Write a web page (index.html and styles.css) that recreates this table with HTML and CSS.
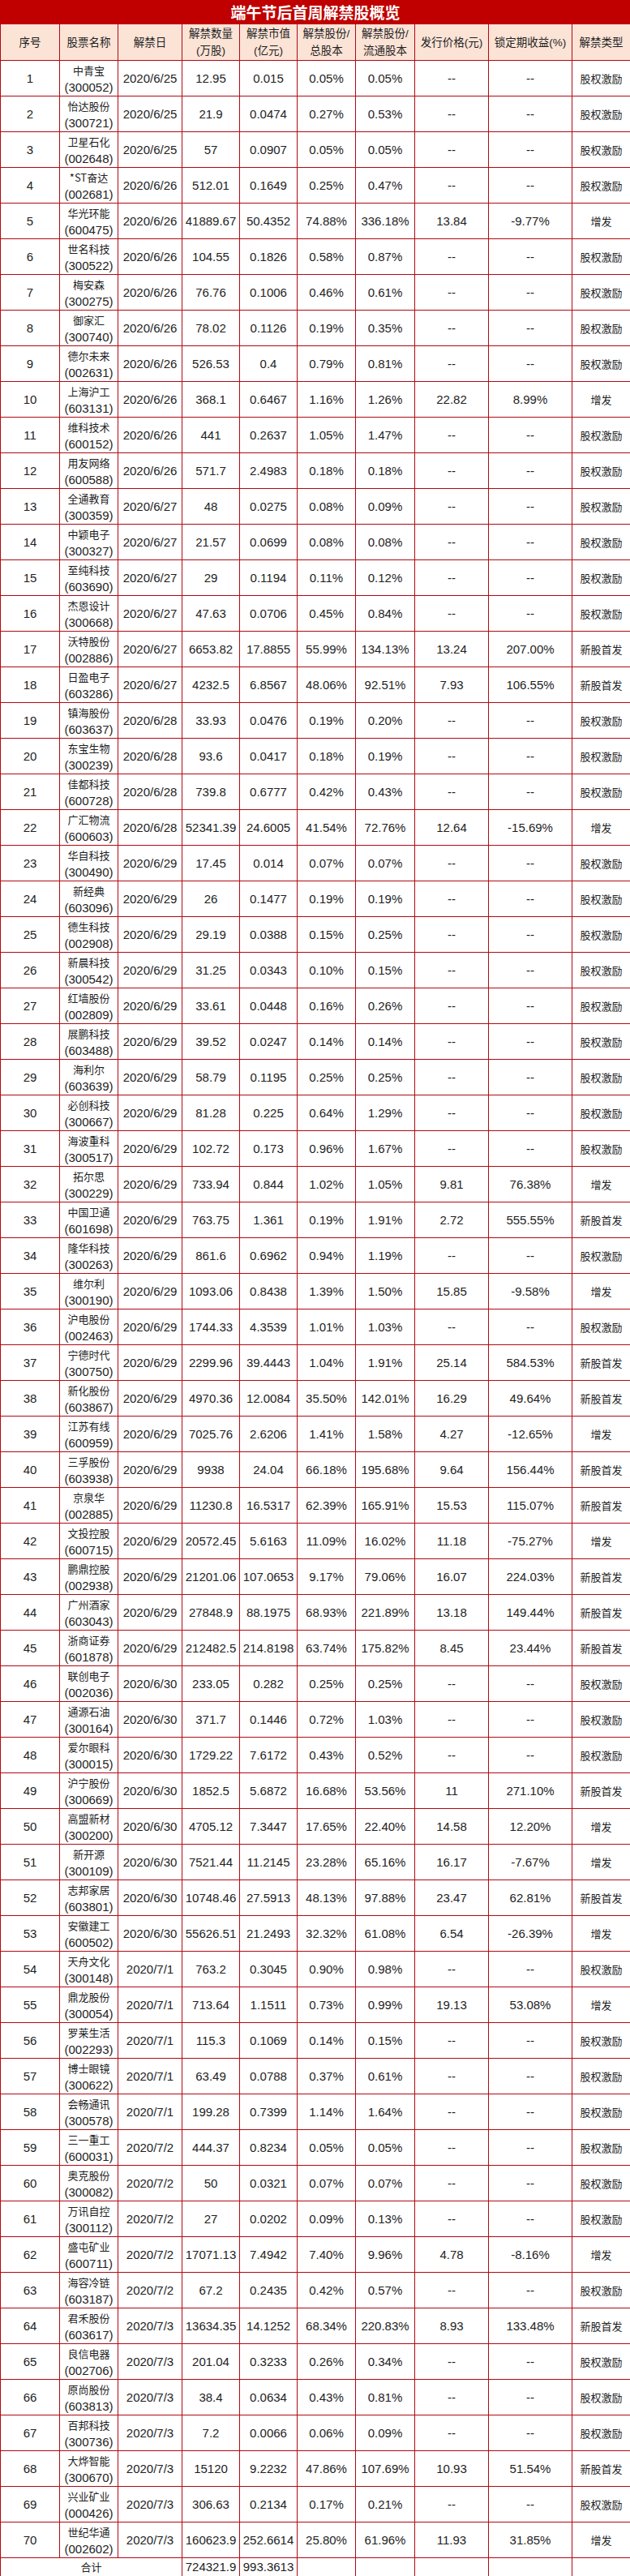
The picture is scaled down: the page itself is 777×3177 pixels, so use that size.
FILE: index.html
```html
<!DOCTYPE html>
<html lang="zh-CN">
<head>
<meta charset="utf-8">
<title>端午节后首周解禁股概览</title>
<link rel="stylesheet" href="styles.css">
</head>
<body>
<table class="tbl">
<colgroup>
<col class="w1"><col class="w2"><col class="w3"><col class="w4"><col class="w5"><col class="w6"><col class="w7"><col class="w8"><col class="w9"><col class="w10">
</colgroup>
<thead>
<tr class="title"><th colspan="10">端午节后首周解禁股概览</th></tr>
<tr class="head"><th>序号</th><th>股票名称</th><th>解禁日</th><th>解禁数量<br>(万股)</th><th>解禁市值<br>(亿元)</th><th>解禁股份/<br>总股本</th><th>解禁股份/<br>流通股本</th><th>发行价格(元)</th><th>锁定期收益(%)</th><th>解禁类型</th></tr>
</thead>
<tbody>
<tr><td>1</td><td><span class="nm">中青宝</span><span class="cd">(300052)</span></td><td>2020/6/25</td><td>12.95</td><td>0.015</td><td>0.05%</td><td>0.05%</td><td>--</td><td>--</td><td class="cn">股权激励</td></tr>
<tr><td>2</td><td><span class="nm">怡达股份</span><span class="cd">(300721)</span></td><td>2020/6/25</td><td>21.9</td><td>0.0474</td><td>0.27%</td><td>0.53%</td><td>--</td><td>--</td><td class="cn">股权激励</td></tr>
<tr><td>3</td><td><span class="nm">卫星石化</span><span class="cd">(002648)</span></td><td>2020/6/25</td><td>57</td><td>0.0907</td><td>0.05%</td><td>0.05%</td><td>--</td><td>--</td><td class="cn">股权激励</td></tr>
<tr><td>4</td><td><span class="nm">*ST奋达</span><span class="cd">(002681)</span></td><td>2020/6/26</td><td>512.01</td><td>0.1649</td><td>0.25%</td><td>0.47%</td><td>--</td><td>--</td><td class="cn">股权激励</td></tr>
<tr><td>5</td><td><span class="nm">华光环能</span><span class="cd">(600475)</span></td><td>2020/6/26</td><td>41889.67</td><td>50.4352</td><td>74.88%</td><td>336.18%</td><td>13.84</td><td>-9.77%</td><td class="cn">增发</td></tr>
<tr><td>6</td><td><span class="nm">世名科技</span><span class="cd">(300522)</span></td><td>2020/6/26</td><td>104.55</td><td>0.1826</td><td>0.58%</td><td>0.87%</td><td>--</td><td>--</td><td class="cn">股权激励</td></tr>
<tr><td>7</td><td><span class="nm">梅安森</span><span class="cd">(300275)</span></td><td>2020/6/26</td><td>76.76</td><td>0.1006</td><td>0.46%</td><td>0.61%</td><td>--</td><td>--</td><td class="cn">股权激励</td></tr>
<tr><td>8</td><td><span class="nm">御家汇</span><span class="cd">(300740)</span></td><td>2020/6/26</td><td>78.02</td><td>0.1126</td><td>0.19%</td><td>0.35%</td><td>--</td><td>--</td><td class="cn">股权激励</td></tr>
<tr><td>9</td><td><span class="nm">德尔未来</span><span class="cd">(002631)</span></td><td>2020/6/26</td><td>526.53</td><td>0.4</td><td>0.79%</td><td>0.81%</td><td>--</td><td>--</td><td class="cn">股权激励</td></tr>
<tr><td>10</td><td><span class="nm">上海沪工</span><span class="cd">(603131)</span></td><td>2020/6/26</td><td>368.1</td><td>0.6467</td><td>1.16%</td><td>1.26%</td><td>22.82</td><td>8.99%</td><td class="cn">增发</td></tr>
<tr><td>11</td><td><span class="nm">维科技术</span><span class="cd">(600152)</span></td><td>2020/6/26</td><td>441</td><td>0.2637</td><td>1.05%</td><td>1.47%</td><td>--</td><td>--</td><td class="cn">股权激励</td></tr>
<tr><td>12</td><td><span class="nm">用友网络</span><span class="cd">(600588)</span></td><td>2020/6/26</td><td>571.7</td><td>2.4983</td><td>0.18%</td><td>0.18%</td><td>--</td><td>--</td><td class="cn">股权激励</td></tr>
<tr><td>13</td><td><span class="nm">全通教育</span><span class="cd">(300359)</span></td><td>2020/6/27</td><td>48</td><td>0.0275</td><td>0.08%</td><td>0.09%</td><td>--</td><td>--</td><td class="cn">股权激励</td></tr>
<tr><td>14</td><td><span class="nm">中颖电子</span><span class="cd">(300327)</span></td><td>2020/6/27</td><td>21.57</td><td>0.0699</td><td>0.08%</td><td>0.08%</td><td>--</td><td>--</td><td class="cn">股权激励</td></tr>
<tr><td>15</td><td><span class="nm">至纯科技</span><span class="cd">(603690)</span></td><td>2020/6/27</td><td>29</td><td>0.1194</td><td>0.11%</td><td>0.12%</td><td>--</td><td>--</td><td class="cn">股权激励</td></tr>
<tr><td>16</td><td><span class="nm">杰恩设计</span><span class="cd">(300668)</span></td><td>2020/6/27</td><td>47.63</td><td>0.0706</td><td>0.45%</td><td>0.84%</td><td>--</td><td>--</td><td class="cn">股权激励</td></tr>
<tr><td>17</td><td><span class="nm">沃特股份</span><span class="cd">(002886)</span></td><td>2020/6/27</td><td>6653.82</td><td>17.8855</td><td>55.99%</td><td>134.13%</td><td>13.24</td><td>207.00%</td><td class="cn">新股首发</td></tr>
<tr><td>18</td><td><span class="nm">日盈电子</span><span class="cd">(603286)</span></td><td>2020/6/27</td><td>4232.5</td><td>6.8567</td><td>48.06%</td><td>92.51%</td><td>7.93</td><td>106.55%</td><td class="cn">新股首发</td></tr>
<tr><td>19</td><td><span class="nm">镇海股份</span><span class="cd">(603637)</span></td><td>2020/6/28</td><td>33.93</td><td>0.0476</td><td>0.19%</td><td>0.20%</td><td>--</td><td>--</td><td class="cn">股权激励</td></tr>
<tr><td>20</td><td><span class="nm">东宝生物</span><span class="cd">(300239)</span></td><td>2020/6/28</td><td>93.6</td><td>0.0417</td><td>0.18%</td><td>0.19%</td><td>--</td><td>--</td><td class="cn">股权激励</td></tr>
<tr><td>21</td><td><span class="nm">佳都科技</span><span class="cd">(600728)</span></td><td>2020/6/28</td><td>739.8</td><td>0.6777</td><td>0.42%</td><td>0.43%</td><td>--</td><td>--</td><td class="cn">股权激励</td></tr>
<tr><td>22</td><td><span class="nm">广汇物流</span><span class="cd">(600603)</span></td><td>2020/6/28</td><td>52341.39</td><td>24.6005</td><td>41.54%</td><td>72.76%</td><td>12.64</td><td>-15.69%</td><td class="cn">增发</td></tr>
<tr><td>23</td><td><span class="nm">华自科技</span><span class="cd">(300490)</span></td><td>2020/6/29</td><td>17.45</td><td>0.014</td><td>0.07%</td><td>0.07%</td><td>--</td><td>--</td><td class="cn">股权激励</td></tr>
<tr><td>24</td><td><span class="nm">新经典</span><span class="cd">(603096)</span></td><td>2020/6/29</td><td>26</td><td>0.1477</td><td>0.19%</td><td>0.19%</td><td>--</td><td>--</td><td class="cn">股权激励</td></tr>
<tr><td>25</td><td><span class="nm">德生科技</span><span class="cd">(002908)</span></td><td>2020/6/29</td><td>29.19</td><td>0.0388</td><td>0.15%</td><td>0.25%</td><td>--</td><td>--</td><td class="cn">股权激励</td></tr>
<tr><td>26</td><td><span class="nm">新晨科技</span><span class="cd">(300542)</span></td><td>2020/6/29</td><td>31.25</td><td>0.0343</td><td>0.10%</td><td>0.15%</td><td>--</td><td>--</td><td class="cn">股权激励</td></tr>
<tr><td>27</td><td><span class="nm">红墙股份</span><span class="cd">(002809)</span></td><td>2020/6/29</td><td>33.61</td><td>0.0448</td><td>0.16%</td><td>0.26%</td><td>--</td><td>--</td><td class="cn">股权激励</td></tr>
<tr><td>28</td><td><span class="nm">展鹏科技</span><span class="cd">(603488)</span></td><td>2020/6/29</td><td>39.52</td><td>0.0247</td><td>0.14%</td><td>0.14%</td><td>--</td><td>--</td><td class="cn">股权激励</td></tr>
<tr><td>29</td><td><span class="nm">海利尔</span><span class="cd">(603639)</span></td><td>2020/6/29</td><td>58.79</td><td>0.1195</td><td>0.25%</td><td>0.25%</td><td>--</td><td>--</td><td class="cn">股权激励</td></tr>
<tr><td>30</td><td><span class="nm">必创科技</span><span class="cd">(300667)</span></td><td>2020/6/29</td><td>81.28</td><td>0.225</td><td>0.64%</td><td>1.29%</td><td>--</td><td>--</td><td class="cn">股权激励</td></tr>
<tr><td>31</td><td><span class="nm">海波重科</span><span class="cd">(300517)</span></td><td>2020/6/29</td><td>102.72</td><td>0.173</td><td>0.96%</td><td>1.67%</td><td>--</td><td>--</td><td class="cn">股权激励</td></tr>
<tr><td>32</td><td><span class="nm">拓尔思</span><span class="cd">(300229)</span></td><td>2020/6/29</td><td>733.94</td><td>0.844</td><td>1.02%</td><td>1.05%</td><td>9.81</td><td>76.38%</td><td class="cn">增发</td></tr>
<tr><td>33</td><td><span class="nm">中国卫通</span><span class="cd">(601698)</span></td><td>2020/6/29</td><td>763.75</td><td>1.361</td><td>0.19%</td><td>1.91%</td><td>2.72</td><td>555.55%</td><td class="cn">新股首发</td></tr>
<tr><td>34</td><td><span class="nm">隆华科技</span><span class="cd">(300263)</span></td><td>2020/6/29</td><td>861.6</td><td>0.6962</td><td>0.94%</td><td>1.19%</td><td>--</td><td>--</td><td class="cn">股权激励</td></tr>
<tr><td>35</td><td><span class="nm">维尔利</span><span class="cd">(300190)</span></td><td>2020/6/29</td><td>1093.06</td><td>0.8438</td><td>1.39%</td><td>1.50%</td><td>15.85</td><td>-9.58%</td><td class="cn">增发</td></tr>
<tr><td>36</td><td><span class="nm">沪电股份</span><span class="cd">(002463)</span></td><td>2020/6/29</td><td>1744.33</td><td>4.3539</td><td>1.01%</td><td>1.03%</td><td>--</td><td>--</td><td class="cn">股权激励</td></tr>
<tr><td>37</td><td><span class="nm">宁德时代</span><span class="cd">(300750)</span></td><td>2020/6/29</td><td>2299.96</td><td>39.4443</td><td>1.04%</td><td>1.91%</td><td>25.14</td><td>584.53%</td><td class="cn">新股首发</td></tr>
<tr><td>38</td><td><span class="nm">新化股份</span><span class="cd">(603867)</span></td><td>2020/6/29</td><td>4970.36</td><td>12.0084</td><td>35.50%</td><td>142.01%</td><td>16.29</td><td>49.64%</td><td class="cn">新股首发</td></tr>
<tr><td>39</td><td><span class="nm">江苏有线</span><span class="cd">(600959)</span></td><td>2020/6/29</td><td>7025.76</td><td>2.6206</td><td>1.41%</td><td>1.58%</td><td>4.27</td><td>-12.65%</td><td class="cn">增发</td></tr>
<tr><td>40</td><td><span class="nm">三孚股份</span><span class="cd">(603938)</span></td><td>2020/6/29</td><td>9938</td><td>24.04</td><td>66.18%</td><td>195.68%</td><td>9.64</td><td>156.44%</td><td class="cn">新股首发</td></tr>
<tr><td>41</td><td><span class="nm">京泉华</span><span class="cd">(002885)</span></td><td>2020/6/29</td><td>11230.8</td><td>16.5317</td><td>62.39%</td><td>165.91%</td><td>15.53</td><td>115.07%</td><td class="cn">新股首发</td></tr>
<tr><td>42</td><td><span class="nm">文投控股</span><span class="cd">(600715)</span></td><td>2020/6/29</td><td>20572.45</td><td>5.6163</td><td>11.09%</td><td>16.02%</td><td>11.18</td><td>-75.27%</td><td class="cn">增发</td></tr>
<tr><td>43</td><td><span class="nm">鹏鼎控股</span><span class="cd">(002938)</span></td><td>2020/6/29</td><td>21201.06</td><td>107.0653</td><td>9.17%</td><td>79.06%</td><td>16.07</td><td>224.03%</td><td class="cn">新股首发</td></tr>
<tr><td>44</td><td><span class="nm">广州酒家</span><span class="cd">(603043)</span></td><td>2020/6/29</td><td>27848.9</td><td>88.1975</td><td>68.93%</td><td>221.89%</td><td>13.18</td><td>149.44%</td><td class="cn">新股首发</td></tr>
<tr><td>45</td><td><span class="nm">浙商证券</span><span class="cd">(601878)</span></td><td>2020/6/29</td><td>212482.5</td><td>214.8198</td><td>63.74%</td><td>175.82%</td><td>8.45</td><td>23.44%</td><td class="cn">新股首发</td></tr>
<tr><td>46</td><td><span class="nm">联创电子</span><span class="cd">(002036)</span></td><td>2020/6/30</td><td>233.05</td><td>0.282</td><td>0.25%</td><td>0.25%</td><td>--</td><td>--</td><td class="cn">股权激励</td></tr>
<tr><td>47</td><td><span class="nm">通源石油</span><span class="cd">(300164)</span></td><td>2020/6/30</td><td>371.7</td><td>0.1446</td><td>0.72%</td><td>1.03%</td><td>--</td><td>--</td><td class="cn">股权激励</td></tr>
<tr><td>48</td><td><span class="nm">爱尔眼科</span><span class="cd">(300015)</span></td><td>2020/6/30</td><td>1729.22</td><td>7.6172</td><td>0.43%</td><td>0.52%</td><td>--</td><td>--</td><td class="cn">股权激励</td></tr>
<tr><td>49</td><td><span class="nm">沪宁股份</span><span class="cd">(300669)</span></td><td>2020/6/30</td><td>1852.5</td><td>5.6872</td><td>16.68%</td><td>53.56%</td><td>11</td><td>271.10%</td><td class="cn">新股首发</td></tr>
<tr><td>50</td><td><span class="nm">高盟新材</span><span class="cd">(300200)</span></td><td>2020/6/30</td><td>4705.12</td><td>7.3447</td><td>17.65%</td><td>22.40%</td><td>14.58</td><td>12.20%</td><td class="cn">增发</td></tr>
<tr><td>51</td><td><span class="nm">新开源</span><span class="cd">(300109)</span></td><td>2020/6/30</td><td>7521.44</td><td>11.2145</td><td>23.28%</td><td>65.16%</td><td>16.17</td><td>-7.67%</td><td class="cn">增发</td></tr>
<tr><td>52</td><td><span class="nm">志邦家居</span><span class="cd">(603801)</span></td><td>2020/6/30</td><td>10748.46</td><td>27.5913</td><td>48.13%</td><td>97.88%</td><td>23.47</td><td>62.81%</td><td class="cn">新股首发</td></tr>
<tr><td>53</td><td><span class="nm">安徽建工</span><span class="cd">(600502)</span></td><td>2020/6/30</td><td>55626.51</td><td>21.2493</td><td>32.32%</td><td>61.08%</td><td>6.54</td><td>-26.39%</td><td class="cn">增发</td></tr>
<tr><td>54</td><td><span class="nm">天舟文化</span><span class="cd">(300148)</span></td><td>2020/7/1</td><td>763.2</td><td>0.3045</td><td>0.90%</td><td>0.98%</td><td>--</td><td>--</td><td class="cn">股权激励</td></tr>
<tr><td>55</td><td><span class="nm">鼎龙股份</span><span class="cd">(300054)</span></td><td>2020/7/1</td><td>713.64</td><td>1.1511</td><td>0.73%</td><td>0.99%</td><td>19.13</td><td>53.08%</td><td class="cn">增发</td></tr>
<tr><td>56</td><td><span class="nm">罗莱生活</span><span class="cd">(002293)</span></td><td>2020/7/1</td><td>115.3</td><td>0.1069</td><td>0.14%</td><td>0.15%</td><td>--</td><td>--</td><td class="cn">股权激励</td></tr>
<tr><td>57</td><td><span class="nm">博士眼镜</span><span class="cd">(300622)</span></td><td>2020/7/1</td><td>63.49</td><td>0.0788</td><td>0.37%</td><td>0.61%</td><td>--</td><td>--</td><td class="cn">股权激励</td></tr>
<tr><td>58</td><td><span class="nm">会畅通讯</span><span class="cd">(300578)</span></td><td>2020/7/1</td><td>199.28</td><td>0.7399</td><td>1.14%</td><td>1.64%</td><td>--</td><td>--</td><td class="cn">股权激励</td></tr>
<tr><td>59</td><td><span class="nm">三一重工</span><span class="cd">(600031)</span></td><td>2020/7/2</td><td>444.37</td><td>0.8234</td><td>0.05%</td><td>0.05%</td><td>--</td><td>--</td><td class="cn">股权激励</td></tr>
<tr><td>60</td><td><span class="nm">奥克股份</span><span class="cd">(300082)</span></td><td>2020/7/2</td><td>50</td><td>0.0321</td><td>0.07%</td><td>0.07%</td><td>--</td><td>--</td><td class="cn">股权激励</td></tr>
<tr><td>61</td><td><span class="nm">万讯自控</span><span class="cd">(300112)</span></td><td>2020/7/2</td><td>27</td><td>0.0202</td><td>0.09%</td><td>0.13%</td><td>--</td><td>--</td><td class="cn">股权激励</td></tr>
<tr><td>62</td><td><span class="nm">盛屯矿业</span><span class="cd">(600711)</span></td><td>2020/7/2</td><td>17071.13</td><td>7.4942</td><td>7.40%</td><td>9.96%</td><td>4.78</td><td>-8.16%</td><td class="cn">增发</td></tr>
<tr><td>63</td><td><span class="nm">海容冷链</span><span class="cd">(603187)</span></td><td>2020/7/2</td><td>67.2</td><td>0.2435</td><td>0.42%</td><td>0.57%</td><td>--</td><td>--</td><td class="cn">股权激励</td></tr>
<tr><td>64</td><td><span class="nm">君禾股份</span><span class="cd">(603617)</span></td><td>2020/7/3</td><td>13634.35</td><td>14.1252</td><td>68.34%</td><td>220.83%</td><td>8.93</td><td>133.48%</td><td class="cn">新股首发</td></tr>
<tr><td>65</td><td><span class="nm">良信电器</span><span class="cd">(002706)</span></td><td>2020/7/3</td><td>201.04</td><td>0.3233</td><td>0.26%</td><td>0.34%</td><td>--</td><td>--</td><td class="cn">股权激励</td></tr>
<tr><td>66</td><td><span class="nm">原尚股份</span><span class="cd">(603813)</span></td><td>2020/7/3</td><td>38.4</td><td>0.0634</td><td>0.43%</td><td>0.81%</td><td>--</td><td>--</td><td class="cn">股权激励</td></tr>
<tr><td>67</td><td><span class="nm">百邦科技</span><span class="cd">(300736)</span></td><td>2020/7/3</td><td>7.2</td><td>0.0066</td><td>0.06%</td><td>0.09%</td><td>--</td><td>--</td><td class="cn">股权激励</td></tr>
<tr><td>68</td><td><span class="nm">大烨智能</span><span class="cd">(300670)</span></td><td>2020/7/3</td><td>15120</td><td>9.2232</td><td>47.86%</td><td>107.69%</td><td>10.93</td><td>51.54%</td><td class="cn">新股首发</td></tr>
<tr><td>69</td><td><span class="nm">兴业矿业</span><span class="cd">(000426)</span></td><td>2020/7/3</td><td>306.63</td><td>0.2134</td><td>0.17%</td><td>0.21%</td><td>--</td><td>--</td><td class="cn">股权激励</td></tr>
<tr><td>70</td><td><span class="nm">世纪华通</span><span class="cd">(002602)</span></td><td>2020/7/3</td><td>160623.9</td><td>252.6614</td><td>25.80%</td><td>61.96%</td><td>11.93</td><td>31.85%</td><td class="cn">增发</td></tr>
</tbody>
<tfoot>
<tr class="total"><td colspan="3" class="cn">合计</td><td>724321.9</td><td>993.3613</td><td></td><td></td><td></td><td></td><td></td></tr>
</tfoot>
</table>
</body>
</html>
```

FILE: styles.css
```css
html, body {
  margin: 0;
  padding: 0;
  background: #ffffff;
}

.tbl {
  width: 777px;
  border-collapse: collapse;
  table-layout: fixed;
  color: #1e1e1e;
  font-family: "Liberation Sans", "Noto Sans CJK SC", sans-serif;
  font-size: 15px;
  line-height: 22px;
}

.w1 { width: 73px; }
.w2 { width: 72px; }
.w3 { width: 79px; }
.w4 { width: 71px; }
.w5 { width: 71px; }
.w6 { width: 72px; }
.w7 { width: 73px; }
.w8 { width: 91px; }
.w9 { width: 103px; }
.w10 { width: 72px; }

.tbl th,
.tbl td {
  border: 1px solid #b00a14;
  padding: 0;
  text-align: center;
  vertical-align: middle;
  white-space: nowrap;
  overflow: hidden;
}

.tbl tbody tr {
  height: 44px;
}

.title th {
  height: 28px;
  background: #c00000;
  color: #ffffff;
  font-family: "Noto Sans CJK SC", sans-serif;
  font-size: 19px;
  font-weight: 700;
  line-height: 28px;
  border-color: #c00000;
}

.head th {
  height: 44px;
  background: #fbe3d6;
  font-size: 13.5px;
  font-weight: 400;
  line-height: 21px;
}

.nm,
.cd {
  display: block;
  height: 21px;
  line-height: 21px;
}

.nm {
  font-family: "Noto Sans CJK SC", sans-serif;
  font-size: 13px;
}

.cn {
  font-family: "Noto Sans CJK SC", sans-serif;
  font-size: 13px;
}

.total td {
  height: 22px;
  line-height: 20px;
}
```
